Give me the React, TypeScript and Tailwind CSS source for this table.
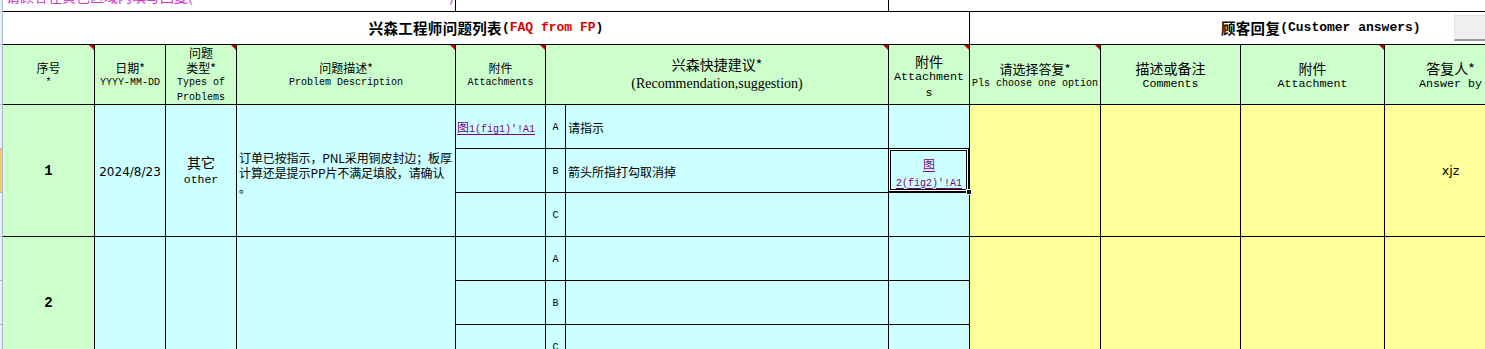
import React from "react";

const B = "border-r border-b border-black";
const CJK = "font-['Noto_Sans_CJK_SC',sans-serif]";
const MONO = "font-['Liberation_Mono','Noto_Sans_CJK_SC',monospace]";
const SERIF = "font-['Liberation_Serif','Noto_Sans_CJK_SC',serif]";
const SANS = "font-['DejaVu_Sans','Noto_Sans_CJK_SC',sans-serif]";

function Tri() {
  return (
    <span className="absolute top-0 right-0 w-0 h-0 border-t-[5px] border-l-[5px] border-t-[#cc0000] border-l-transparent" />
  );
}

function H({
  pos,
  tri,
  children,
  extra = "",
}: {
  pos: string;
  tri?: boolean;
  children: React.ReactNode;
  extra?: string;
}) {
  return (
    <div
      className={`relative ${B} bg-[#ccffcc] flex flex-col items-center justify-center text-center text-black whitespace-nowrap overflow-visible ${pos} ${extra}`}
    >
      {tri && <Tri />}
      {children}
    </div>
  );
}

function Cn12({ children }: { children: React.ReactNode }) {
  return <span className={`${CJK} text-[12px] leading-[15px]`}>{children}</span>;
}
function Mo10({ children }: { children: React.ReactNode }) {
  return <span className={`${MONO} text-[10px] leading-[15px]`}>{children}</span>;
}
function Cn14({ children }: { children: React.ReactNode }) {
  return <span className={`${CJK} text-[14px] leading-[16px]`}>{children}</span>;
}
function Mo12({ children }: { children: React.ReactNode }) {
  return <span className={`${MONO} text-[11.7px] leading-[16px]`}>{children}</span>;
}

function Strip({ pos, active }: { pos: string; active?: boolean }) {
  return (
    <div
      className={`${pos} col-start-1 border-r border-b border-[#a9b9cc] ${
        active ? "bg-[#f8c56c]" : "bg-[#e8eef6]"
      }`}
    />
  );
}

function Link({ children }: { children: React.ReactNode }) {
  return <span className="text-[#800080] underline underline-offset-2">{children}</span>;
}

export default function App() {
  return (
    <div className="w-[1485px] h-[349px] overflow-hidden bg-white text-black">
      <div className="grid grid-cols-[3px_92px_71px_71px_219px_90px_20px_323px_81px_131px_140px_144px_132px] grid-rows-[12px_33px_60px_44px_44px_44px_44px_44px_44px] w-[1517px]">
        {/* strip */}
        <Strip pos="row-start-1" />
        <Strip pos="row-start-2" />
        <Strip pos="row-start-3" />
        <Strip pos="row-start-4" />
        <Strip pos="row-start-5" active />
        <Strip pos="row-start-6" />
        <Strip pos="row-start-7" />
        <Strip pos="row-start-8" />
        <Strip pos="row-start-9" />

        {/* top row (cropped) */}
        <div className={`row-start-1 col-start-2 col-span-4 ${B} overflow-hidden`}>
          <div
            className={`-mt-[12px] pl-[3px] pr-[1px] flex justify-between ${CJK} text-[14px] leading-[16px] text-[#cc33cc] whitespace-nowrap`}
          >
            <span>请顾客在黄色区域内填写回复(</span>
            <span>)</span>
          </div>
        </div>
        <div className={`row-start-1 col-start-6 col-span-3 ${B}`} />
        <div className="row-start-1 col-start-9 col-span-5 border-b border-black" />

        {/* title row */}
        <div
          className={`row-start-2 col-start-2 col-span-8 ${B} flex items-center justify-center whitespace-nowrap`}
        >
          <span className={`${CJK} text-[14.5px] font-bold tracking-[0.3px] leading-[20px]`}>
            兴森工程师问题列表
          </span>
          <span className={`${MONO} text-[13px] font-bold leading-[20px]`}>(</span>
          <span className={`${MONO} text-[13px] font-bold leading-[20px] text-[#dd0000]`}>
            FAQ from FP
          </span>
          <span className={`${MONO} text-[13px] font-bold leading-[20px]`}>)</span>
        </div>
        <div className="row-start-2 col-start-10 col-span-4 border-b border-black relative flex items-center pl-[251px] whitespace-nowrap">
          <span className={`${CJK} text-[14.5px] font-bold tracking-[0.3px] leading-[20px]`}>
            顾客回复
          </span>
          <span className={`${MONO} text-[13px] font-bold leading-[20px]`}>
            (Customer answers)
          </span>
          <div className="absolute left-[484px] top-[3px] w-[60px] h-[26px] bg-[#efefef] border-t border-l border-[#e2e2e2] border-b-2 border-b-[#9a9a9a]" />
        </div>

        {/* header row */}
        <H pos="row-start-3 col-start-2" tri>
          <Cn12>序号</Cn12>
          <Mo10>*</Mo10>
        </H>
        <H pos="row-start-3 col-start-3">
          <Cn12>日期*</Cn12>
          <Mo10>YYYY-MM-DD</Mo10>
        </H>
        <H pos="row-start-3 col-start-4" tri>
          <Cn12>问题</Cn12>
          <Cn12>类型*</Cn12>
          <Mo10>Types of</Mo10>
          <Mo10>Problems</Mo10>
        </H>
        <H pos="row-start-3 col-start-5" tri>
          <Cn12>问题描述*</Cn12>
          <Mo10>Problem Description</Mo10>
        </H>
        <H pos="row-start-3 col-start-6" tri>
          <Cn12>附件</Cn12>
          <Mo10>Attachments</Mo10>
        </H>
        <H pos="row-start-3 col-start-7 col-span-2" tri extra="pb-[2px]">
          <span className={`${CJK} text-[14px] leading-[20px]`}>兴森快捷建议*</span>
          <span className={`${SERIF} text-[14px] leading-[20px]`}>
            (Recommendation,suggestion)
          </span>
        </H>
        <H pos="row-start-3 col-start-9" tri extra="pt-[5px]">
          <Cn14>附件</Cn14>
          <Mo12>Attachment</Mo12>
          <Mo12>s</Mo12>
        </H>
        <H pos="row-start-3 col-start-10" tri extra="pt-[3px]">
          <span className={`${CJK} text-[13px] leading-[15px]`}>请选择答复*</span>
          <Mo10>Pls choose one option</Mo10>
        </H>
        <H pos="row-start-3 col-start-11" extra="pt-[3px]">
          <Cn14>描述或备注</Cn14>
          <Mo12>Comments</Mo12>
        </H>
        <H pos="row-start-3 col-start-12" tri extra="pt-[3px]">
          <Cn14>附件</Cn14>
          <Mo12>Attachment</Mo12>
        </H>
        <H pos="row-start-3 col-start-13" extra="pt-[3px]">
          <Cn14>答复人*</Cn14>
          <Mo12>Answer by</Mo12>
        </H>

        {/* data row 1 */}
        <div
          className={`row-start-4 row-span-3 col-start-2 ${B} bg-[#ccffcc] flex items-center justify-center pt-[2px]`}
        >
          <span className={`${MONO} font-bold text-[14px]`}>1</span>
        </div>
        <div
          className={`row-start-4 row-span-3 col-start-3 ${B} bg-[#ccffff] flex items-center justify-center pt-[2px]`}
        >
          <span className={`${SANS} text-[12px]`}>2024/8/23</span>
        </div>
        <div
          className={`row-start-4 row-span-3 col-start-4 ${B} bg-[#ccffff] flex flex-col items-center justify-center`}
        >
          <span className={`${CJK} text-[14px] leading-[17px]`}>其它</span>
          <span className={`${MONO} text-[11.5px] leading-[17px]`}>other</span>
        </div>
        <div
          className={`row-start-4 row-span-3 col-start-5 ${B} bg-[#ccffff] flex items-center pl-[2px] pt-[3px]`}
        >
          <div className={`${CJK} text-[12px] leading-[15px] whitespace-nowrap tracking-[-0.1px]`}>
            订单已按指示，PNL采用铜皮封边；板厚
            <br />
            计算还是提示PP片不满足填胶，请确认
            <br />。
          </div>
        </div>

        {/* sub rows row 1 */}
        <div className={`row-start-4 col-start-6 ${B} bg-[#ccffff] flex items-center pl-[1px] pt-[2px]`}>
          <span className={`${MONO} text-[10px] whitespace-nowrap`}>
            <Link>
              <span className={`${CJK} text-[12px]`}>图</span>1(fig1)'!A1
            </Link>
          </span>
        </div>
        <div className={`row-start-5 col-start-6 ${B} bg-[#ccffff]`} />
        <div className={`row-start-6 col-start-6 ${B} bg-[#ccffff]`} />

        <div className={`row-start-4 col-start-7 ${B} bg-[#ccffff] flex items-center justify-center pt-[2px]`}>
          <span className={`${MONO} text-[10px]`}>A</span>
        </div>
        <div className={`row-start-5 col-start-7 ${B} bg-[#ccffff] flex items-center justify-center pt-[2px]`}>
          <span className={`${MONO} text-[10px]`}>B</span>
        </div>
        <div className={`row-start-6 col-start-7 ${B} bg-[#ccffff] flex items-center justify-center pt-[2px]`}>
          <span className={`${MONO} text-[10px]`}>C</span>
        </div>

        <div className={`row-start-4 col-start-8 ${B} bg-[#ccffff] flex items-center pl-[2px] pt-[2px]`}>
          <span className={`${CJK} text-[12px]`}>请指示</span>
        </div>
        <div className={`row-start-5 col-start-8 ${B} bg-[#ccffff] flex items-center pl-[2px] pt-[2px]`}>
          <span className={`${CJK} text-[12px]`}>箭头所指打勾取消掉</span>
        </div>
        <div className={`row-start-6 col-start-8 ${B} bg-[#ccffff]`} />

        <div className={`row-start-4 col-start-9 ${B} bg-[#ccffff]`} />
        <div
          className={`row-start-5 col-start-9 ${B} bg-[#ccffff] relative z-10 flex flex-col items-center justify-center pt-[1px]`}
        >
          <Link>
            <span className={`${CJK} text-[12px] leading-[17px]`}>图</span>
          </Link>
          <span className={`${MONO} text-[10px] leading-[17px] whitespace-nowrap`}>
            <Link>2(fig2)'!A1</Link>
          </span>
          <div className="absolute -left-px -top-px right-0 bottom-0 border border-black shadow-[inset_0_0_0_1px_#ffffff,inset_0_0_0_2px_#000000] pointer-events-none" />
          <div className="absolute right-[-3px] bottom-[-3px] w-[6px] h-[6px] bg-[#101030] border border-white" />
        </div>
        <div className={`row-start-6 col-start-9 ${B} bg-[#ccffff]`} />

        <div className={`row-start-4 row-span-3 col-start-10 ${B} bg-[#ffff99]`} />
        <div className={`row-start-4 row-span-3 col-start-11 ${B} bg-[#ffff99]`} />
        <div className={`row-start-4 row-span-3 col-start-12 ${B} bg-[#ffff99]`} />
        <div
          className={`row-start-4 row-span-3 col-start-13 ${B} bg-[#ffff99] flex items-center justify-center pt-[2px]`}
        >
          <span className={`${SANS} text-[12.5px]`}>xjz</span>
        </div>

        {/* data row 2 */}
        <div
          className={`row-start-7 row-span-3 col-start-2 ${B} bg-[#ccffcc] flex items-center justify-center pt-[2px]`}
        >
          <span className={`${MONO} font-bold text-[14px]`}>2</span>
        </div>
        <div className={`row-start-7 row-span-3 col-start-3 ${B} bg-[#ccffff]`} />
        <div className={`row-start-7 row-span-3 col-start-4 ${B} bg-[#ccffff]`} />
        <div className={`row-start-7 row-span-3 col-start-5 ${B} bg-[#ccffff]`} />

        <div className={`row-start-7 col-start-6 ${B} bg-[#ccffff]`} />
        <div className={`row-start-8 col-start-6 ${B} bg-[#ccffff]`} />
        <div className={`row-start-9 col-start-6 ${B} bg-[#ccffff]`} />

        <div className={`row-start-7 col-start-7 ${B} bg-[#ccffff] flex items-center justify-center pt-[2px]`}>
          <span className={`${MONO} text-[10px]`}>A</span>
        </div>
        <div className={`row-start-8 col-start-7 ${B} bg-[#ccffff] flex items-center justify-center pt-[2px]`}>
          <span className={`${MONO} text-[10px]`}>B</span>
        </div>
        <div className={`row-start-9 col-start-7 ${B} bg-[#ccffff] flex items-center justify-center pt-[2px]`}>
          <span className={`${MONO} text-[10px]`}>C</span>
        </div>

        <div className={`row-start-7 col-start-8 ${B} bg-[#ccffff]`} />
        <div className={`row-start-8 col-start-8 ${B} bg-[#ccffff]`} />
        <div className={`row-start-9 col-start-8 ${B} bg-[#ccffff]`} />

        <div className={`row-start-7 col-start-9 ${B} bg-[#ccffff]`} />
        <div className={`row-start-8 col-start-9 ${B} bg-[#ccffff]`} />
        <div className={`row-start-9 col-start-9 ${B} bg-[#ccffff]`} />

        <div className={`row-start-7 row-span-3 col-start-10 ${B} bg-[#ffff99]`} />
        <div className={`row-start-7 row-span-3 col-start-11 ${B} bg-[#ffff99]`} />
        <div className={`row-start-7 row-span-3 col-start-12 ${B} bg-[#ffff99]`} />
        <div className={`row-start-7 row-span-3 col-start-13 ${B} bg-[#ffff99]`} />
      </div>
    </div>
  );
}
